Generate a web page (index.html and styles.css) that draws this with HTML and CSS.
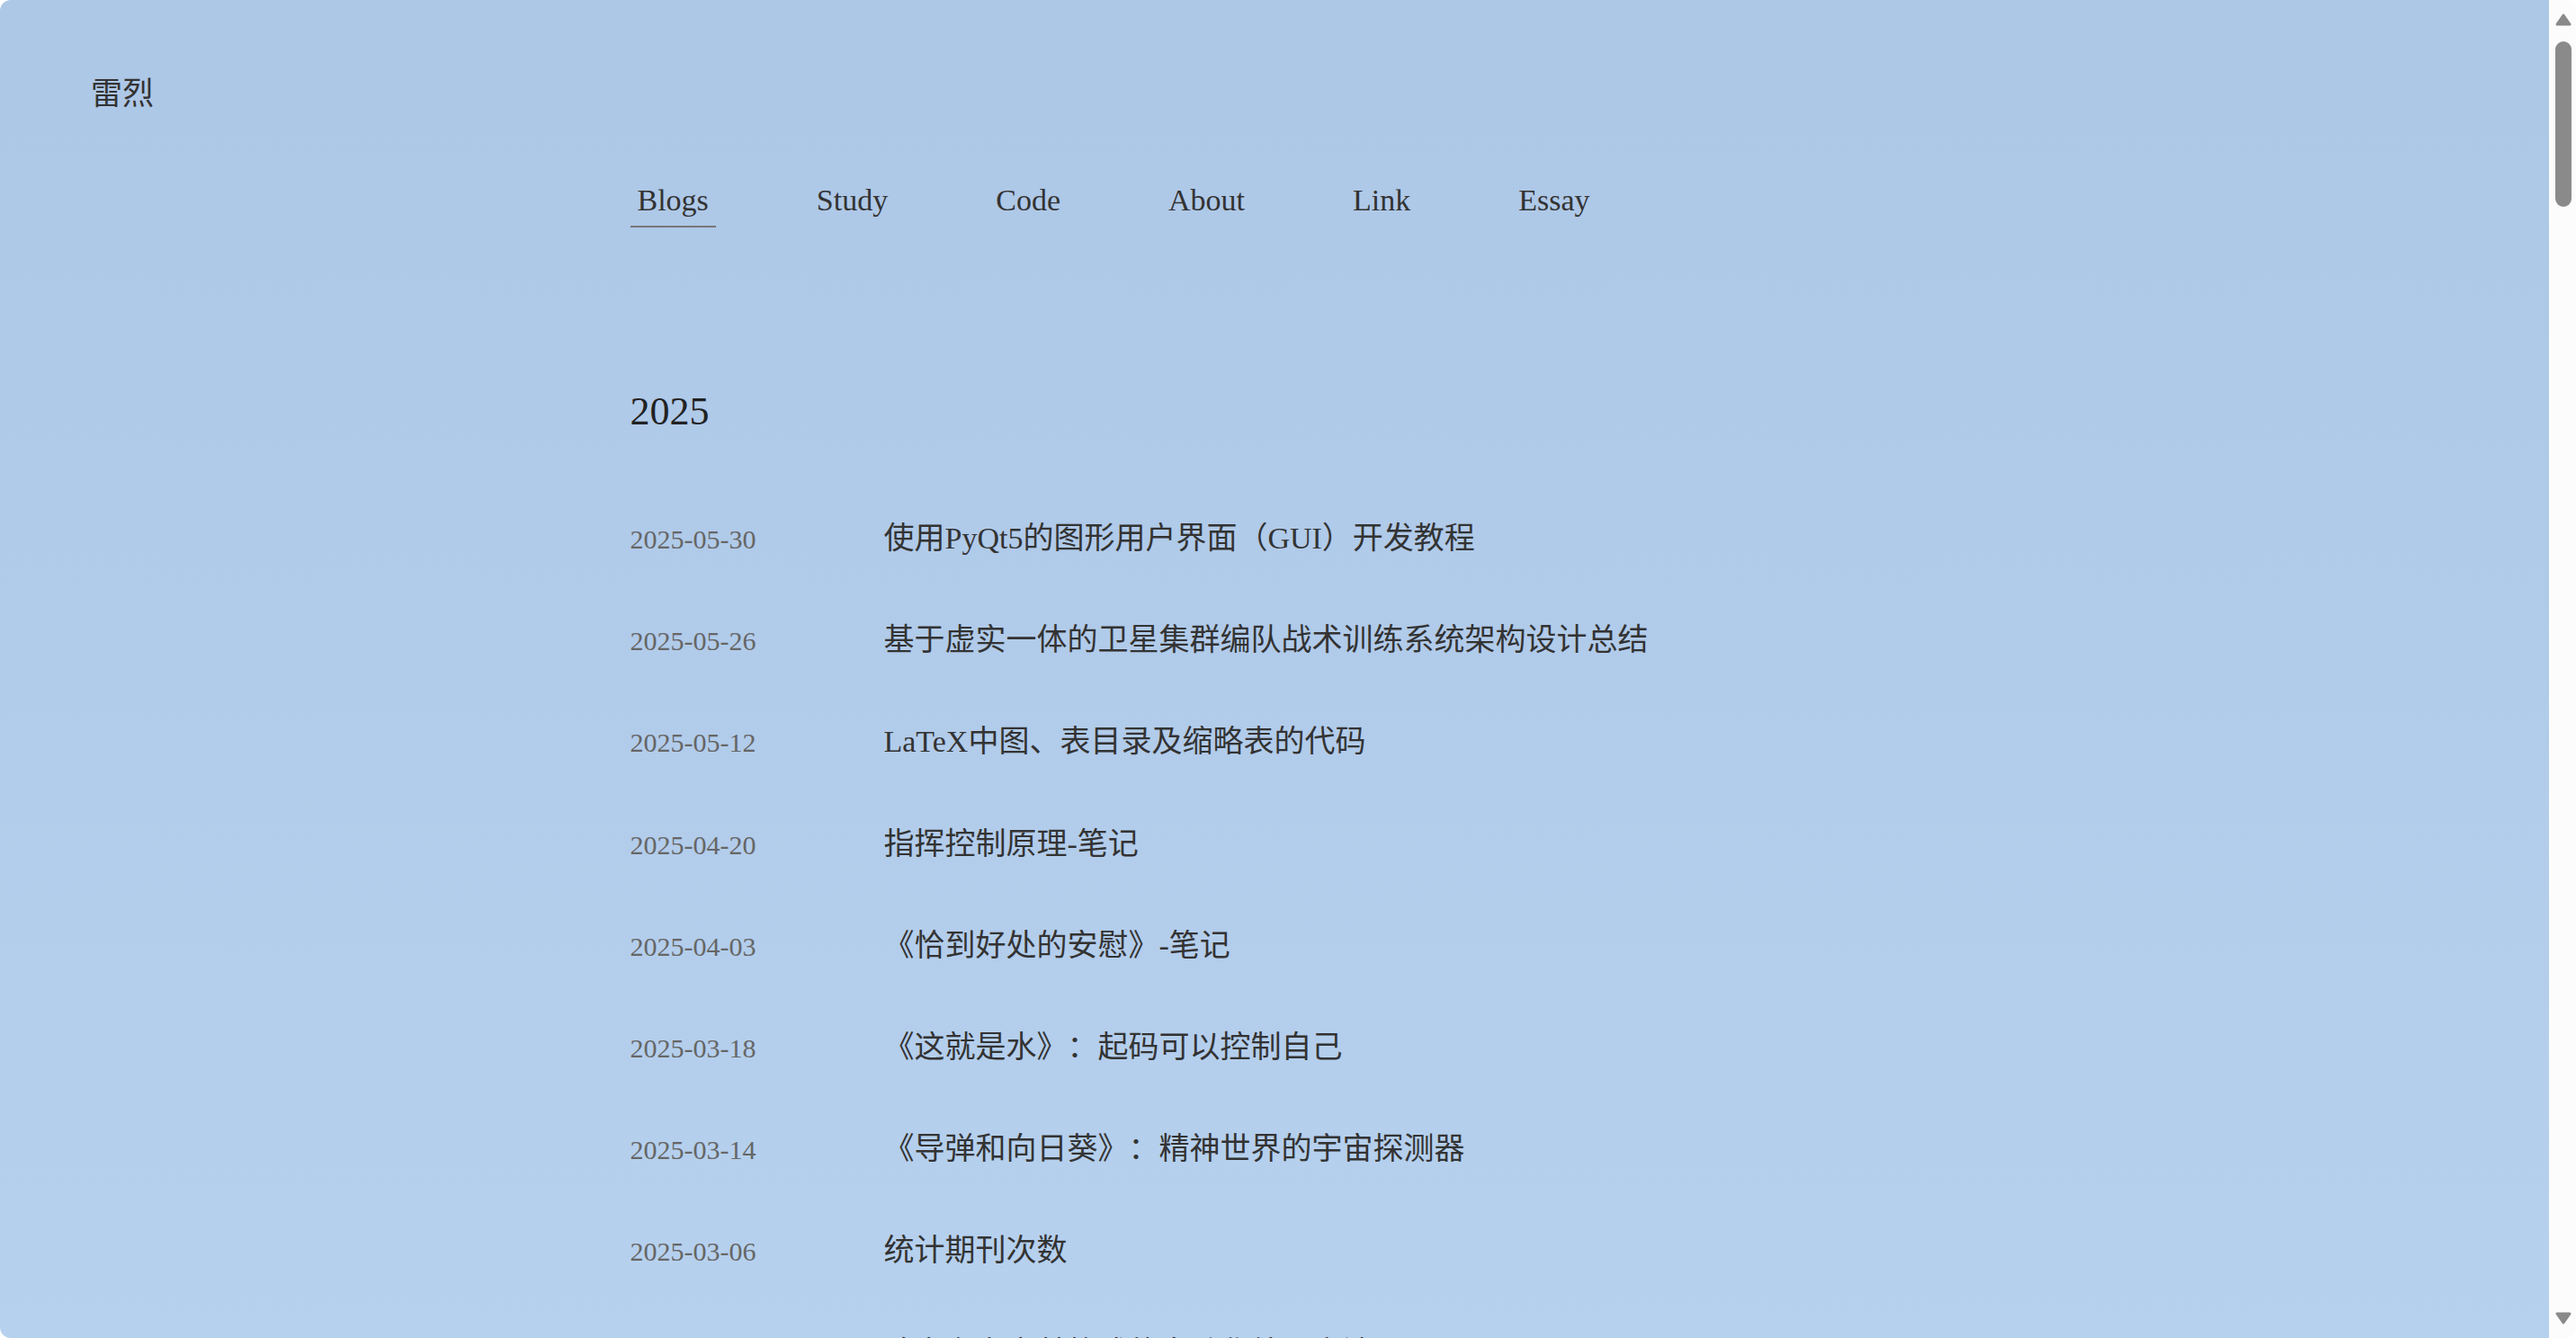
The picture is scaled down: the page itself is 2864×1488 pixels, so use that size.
FILE: index.html
```html
<!DOCTYPE html>
<html lang="zh-CN">
<head>
<meta charset="utf-8">
<title>雷烈</title>
<link rel="stylesheet" href="styles.css">
</head>
<body>
<div class="window">
  <div class="page">
    <header class="site-header">
      <div class="site-title">雷烈</div>
    </header>
    <div class="content">
      <nav class="nav">
        <a class="nav-item active" href="#">Blogs</a>
        <a class="nav-item" href="#">Study</a>
        <a class="nav-item" href="#">Code</a>
        <a class="nav-item" href="#">About</a>
        <a class="nav-item" href="#">Link</a>
        <a class="nav-item" href="#">Essay</a>
      </nav>
      <h2 class="year">2025</h2>
      <ul class="posts">
        <li class="post"><span class="date">2025-05-30</span><a class="post-title" href="#">使用PyQt5的图形用户界面（GUI）开发教程</a></li>
        <li class="post"><span class="date">2025-05-26</span><a class="post-title" href="#">基于虚实一体的卫星集群编队战术训练系统架构设计总结</a></li>
        <li class="post"><span class="date">2025-05-12</span><a class="post-title" href="#">LaTeX中图、表目录及缩略表的代码</a></li>
        <li class="post"><span class="date">2025-04-20</span><a class="post-title" href="#">指挥控制原理-笔记</a></li>
        <li class="post"><span class="date">2025-04-03</span><a class="post-title" href="#">《恰到好处的安慰》-笔记</a></li>
        <li class="post"><span class="date">2025-03-18</span><a class="post-title" href="#">《这就是水》：起码可以控制自己</a></li>
        <li class="post"><span class="date">2025-03-14</span><a class="post-title" href="#">《导弹和向日葵》：精神世界的宇宙探测器</a></li>
        <li class="post"><span class="date">2025-03-06</span><a class="post-title" href="#">统计期刊次数</a></li>
        <li class="post"><span class="date">2025-02-27</span><a class="post-title" href="#">论文参考文献格式的自动化处理方法</a></li>
      </ul>
    </div>
  </div>
  <aside class="scrollbar">
    <svg class="arrow" width="18" height="14" viewBox="0 0 18 14"><polygon points="9,2 16,12 2,12" fill="#8a8a8a" stroke="#8a8a8a" stroke-width="3" stroke-linejoin="round"/></svg>
    <div class="track"><div class="thumb"></div></div>
    <svg class="arrow" width="18" height="14" viewBox="0 0 18 14"><polygon points="2,2 16,2 9,12" fill="#8a8a8a" stroke="#8a8a8a" stroke-width="3" stroke-linejoin="round"/></svg>
  </aside>
</div>
</body>
</html>
```

FILE: styles.css
```css
html, body {
  margin: 0;
  padding: 0;
  background: #ffffff;
  height: 1488px;
  overflow: hidden;
}

.window {
  display: flex;
  height: 1488px;
  border-radius: 12px;
  overflow: hidden;
  background: #fcfcfc;
}

.page {
  flex: 1;
  height: 1488px;
  overflow: hidden;
  background: linear-gradient(180deg, #adc7e6 0%, #b1cbea 50%, #b6d1ee 100%);
  font-family: "Liberation Serif", "Noto Sans CJK SC", serif;
  color: #333;
  text-spacing-trim: space-all;
}

.site-header {
  padding: 79px 0 0 101px;
}

.site-title {
  font-size: 35px;
  line-height: 52px;
  color: #333;
}

.content {
  width: 1434px;
  margin: 0 auto;
  padding-left: 1px;
}

.nav {
  display: flex;
  gap: 104px;
  margin-top: 66px;
}

.nav-item {
  font-size: 34px;
  line-height: 51px;
  padding: 0 8px 3px;
  color: #333;
  text-decoration: none;
  border-bottom: 2px solid transparent;
}

.nav-item.active {
  border-bottom-color: #777;
}

.year {
  margin: 172px 0 0;
  font-size: 44px;
  line-height: 66px;
  font-weight: normal;
  color: #222;
}

.posts {
  list-style: none;
  margin: 50px 0 0;
  padding: 0;
}

.post {
  display: grid;
  grid-template-columns: 282px 1fr;
  align-items: baseline;
  height: 113.2px;
  box-sizing: border-box;
  padding: 32px 0 30px;
  line-height: 51.2px;
}

.date {
  font-size: 30px;
  color: #666;
}

.post-title {
  font-size: 34px;
  color: #333;
  text-decoration: none;
}

.scrollbar {
  width: 30px;
  height: 1488px;
  background: #fcfcfc;
  display: flex;
  flex-direction: column;
  align-items: center;
  padding: 15px 0 15px;
  box-sizing: border-box;
}

.arrow {
  display: block;
  margin-left: 1px;
}

.track {
  flex: 1;
  width: 18px;
  padding-top: 17px;
  margin-left: 1px;
}

.thumb {
  width: 18px;
  height: 184px;
  border-radius: 9px;
  background: #8a8a8a;
}
```
